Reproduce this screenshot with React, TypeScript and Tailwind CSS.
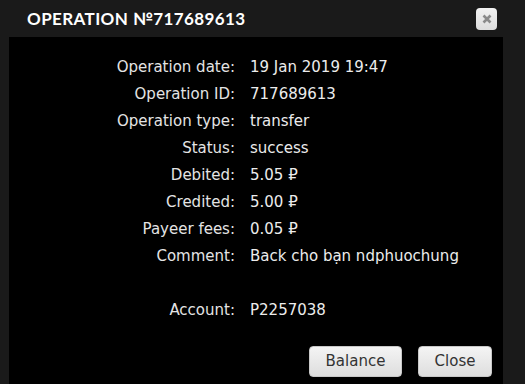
import React from "react";

const rows: [string, string][] = [
  ["Operation date:", "19 Jan 2019 19:47"],
  ["Operation ID:", "717689613"],
  ["Operation type:", "transfer"],
  ["Status:", "success"],
  ["Debited:", "5.05 ₽"],
  ["Credited:", "5.00 ₽"],
  ["Payeer fees:", "0.05 ₽"],
  ["Comment:", "Back cho bạn ndphuochung"],
  ["", ""],
  ["Account:", "P2257038"],
];

function Button({ label, w }: { label: string; w: string }) {
  return (
    <button
      className={`${w} h-[31px] rounded-[4px] border border-[#c8c8c8] bg-gradient-to-b from-[#f4f4f4] to-[#dedede] text-[15px] text-[#333] font-['DejaVu_Sans',sans-serif]`}
    >
      {label}
    </button>
  );
}

export default function App() {
  return (
    <div className="w-[525px] h-[384px] bg-[#1a1a1a] flex flex-col overflow-hidden relative">
      <div className="h-[37px] flex items-center justify-between pl-[27px] pr-[28px] shrink-0">
        <h1 className="text-white text-[17px] font-bold tracking-[0.4px] font-['Lato',sans-serif]">
          OPERATION №717689613
        </h1>
        <button className="w-[21px] h-[22px] rounded-[4px] bg-gradient-to-b from-[#f2f2f2] to-[#dcdcdc] flex items-center justify-center">
          <svg width="10" height="10" viewBox="0 0 10 10">
            <path d="M1.5 1.5 L8.5 8.5 M8.5 1.5 L1.5 8.5" stroke="#8a8a8a" strokeWidth="2.6" />
          </svg>
        </button>
      </div>
      <div className="ml-[9px] w-[494px] flex-1 bg-black flex flex-col pt-[17px] pr-[11px]">
        <div className="grid grid-cols-[226px_1fr] gap-x-[15px] text-[15px] leading-[27px] font-['DejaVu_Sans',sans-serif]">
          {rows.map(([k, v], i) => (
            <React.Fragment key={i}>
              <div className="text-right text-[#e4e4e4] h-[27px]">{k}</div>
              <div className="text-[#ececec] h-[27px]">{v}</div>
            </React.Fragment>
          ))}
        </div>
        <div className="flex justify-end gap-[16px] mt-[22px]">
          <Button label="Balance" w="w-[93px]" />
          <Button label="Close" w="w-[74px]" />
        </div>
      </div>
    </div>
  );
}
